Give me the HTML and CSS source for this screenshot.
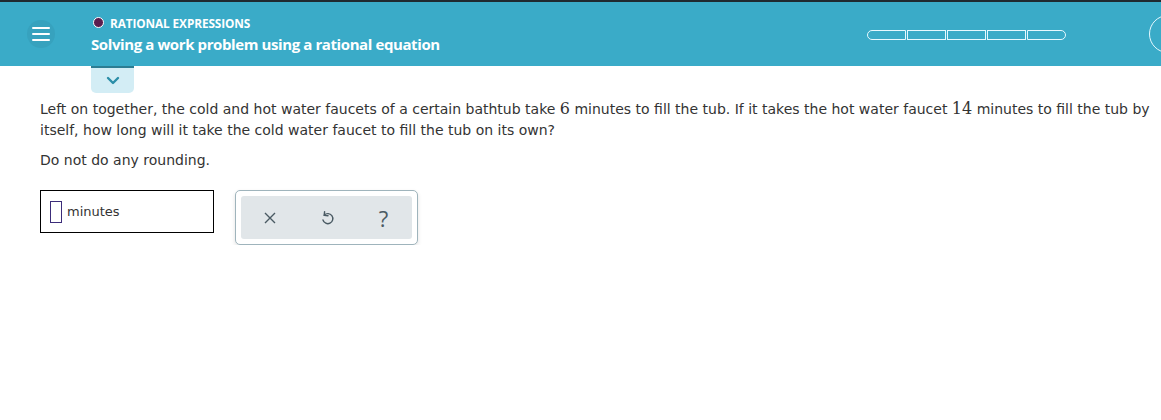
FILE: index.html
```html
<!DOCTYPE html>
<html lang="en">
<head>
    <meta charset="UTF-8">
    <meta name="viewport" content="width=device-width, initial-scale=1.0">
    <title>Solving a work problem using a rational equation</title>
    <link rel="stylesheet" href="styles.css">
</head>
<body>

<div class="topbar">
    <button class="menu-btn" aria-label="Menu">
        <span></span><span></span><span></span>
    </button>
    <div class="topic">
        <div class="topic-label"><span class="dot"></span>RATIONAL EXPRESSIONS</div>
        <div class="topic-title">Solving a work problem using a rational equation</div>
    </div>
    <div class="progress">
        <span></span><span></span><span></span><span></span><span></span>
    </div>
    <div class="ring"></div>
</div>

<div class="tab">
    <svg width="14" height="9" viewBox="0 0 14 9">
        <path d="M2 2 L7 7 L12 2" fill="none" stroke="#2b8ea8" stroke-width="2.4" stroke-linecap="round" stroke-linejoin="round"/>
    </svg>
</div>

<div class="question">
    <p>Left on together, the cold and hot water faucets of a certain bathtub take <span class="num">6</span> minutes to fill the tub. If it takes the hot water faucet <span class="num">14</span> minutes to fill the tub by<br>itself, how long will it take the cold water faucet to fill the tub on its own?</p>
    <p class="note">Do not do any rounding.</p>

    <div class="answer-row">
        <div class="answer-box">
            <span class="caret"></span>
            <span class="unit">minutes</span>
        </div>
        <div class="tools">
            <div class="tools-inner">
                <button class="tool" aria-label="Clear">
                    <svg width="14" height="14" viewBox="0 0 14 14">
                        <path d="M2 2 L12 12 M12 2 L2 12" stroke="#4a5a63" stroke-width="1.4" fill="none"/>
                    </svg>
                </button>
                <button class="tool" aria-label="Undo">
                    <svg width="14" height="16" viewBox="0 0 14 16">
                        <path d="M4.2 5.2 A5 5 0 1 1 3 10" stroke="#4a5a63" stroke-width="1.4" fill="none" stroke-linecap="round"/>
                        <path d="M4.6 1.6 L4.2 5.4 L8 5.8" stroke="#4a5a63" stroke-width="1.4" fill="none" stroke-linecap="round" stroke-linejoin="round"/>
                    </svg>
                </button>
                <button class="tool help" aria-label="Help">?</button>
            </div>
        </div>
    </div>
</div>

</body>
</html>
```

FILE: styles.css
```css
body {
    margin: 0;
    font-family: "DejaVu Sans", Verdana, sans-serif;
    color: #333;
    background-color: #fff;
}
.topbar {
    display: flex;
    align-items: center;
    height: 64px;
    border-top: 2px solid #1f2a30;
    background-color: #3aabc8;
    overflow: hidden;
}
.menu-btn {
    display: flex;
    flex-direction: column;
    justify-content: center;
    gap: 4px;
    width: 28px;
    height: 28px;
    margin-left: 27px;
    padding: 0 5px;
    border: none;
    border-radius: 50%;
    background-color: #37a2be;
}
.menu-btn span {
    display: block;
    height: 2px;
    background-color: #fff;
    border-radius: 1px;
}
.topic {
    margin-left: 36px;
    font-family: "Open Sans", sans-serif;
    color: #fff;
}
.topic-label {
    display: flex;
    align-items: center;
    gap: 6px;
    margin-left: 2px;
    font-size: 11.8px;
    font-weight: 700;
    letter-spacing: -0.1px;
}
.dot {
    width: 9px;
    height: 9px;
    border: 1.5px solid #fff;
    border-radius: 50%;
    background-color: #5a1d4e;
}
.topic-title {
    margin-top: 3px;
    font-size: 15px;
    font-weight: 700;
    letter-spacing: -0.4px;
}
.progress {
    display: flex;
    margin-left: auto;
    margin-top: 2px;
}
.progress span {
    width: 37px;
    height: 8px;
    border: 1.5px solid #e6f9ff;
    margin-right: 1px;
}
.progress span:first-child {
    border-radius: 6px 0 0 6px;
}
.progress span:last-child {
    border-radius: 0 6px 6px 0;
    margin-right: 0;
}
.ring {
    flex-shrink: 0;
    width: 36px;
    height: 36px;
    margin-left: 83px;
    margin-right: -26px;
    border: 1.5px solid #e6f9ff;
    border-radius: 50%;
}
.tab {
    display: flex;
    justify-content: center;
    align-items: center;
    width: 43px;
    height: 25px;
    margin-left: 91px;
    border-top: 2px solid #2c7d93;
    border-radius: 0 0 5px 5px;
    background-color: #d3edf5;
}
.question {
    padding: 6px 0 0 40px;
    font-size: 14px;
}
.question p {
    margin: 0;
    line-height: 21px;
}
.num {
    font-family: "DejaVu Serif", "Liberation Serif", serif;
    font-size: 16px;
    line-height: 14px;
}
.question .note {
    margin-top: 9px;
}
.answer-row {
    display: flex;
    align-items: flex-start;
    gap: 21px;
    margin-top: 19px;
}
.answer-box {
    display: flex;
    align-items: center;
    width: 172px;
    height: 41px;
    border: 1px solid #000;
}
.caret {
    width: 10px;
    height: 20px;
    margin-left: 9px;
    border: 1px solid #3c2d7a;
}
.unit {
    margin-left: 5px;
    font-size: 13px;
}
.tools {
    padding: 5px;
    border: 1px solid #9fb4bc;
    border-radius: 5px;
    background-color: #fff;
    box-shadow: 0 2px 4px rgba(0, 0, 0, 0.12);
}
.tools-inner {
    display: flex;
    justify-content: space-around;
    align-items: center;
    width: 171px;
    height: 43px;
    border-radius: 3px;
    background-color: #e1e6e9;
}
.tool {
    display: flex;
    align-items: center;
    justify-content: center;
    width: 30px;
    height: 30px;
    padding: 0;
    border: none;
    background: none;
}
.help {
    font-family: "Open Sans", sans-serif;
    font-size: 22px;
    color: #4a5a63;
}
```
